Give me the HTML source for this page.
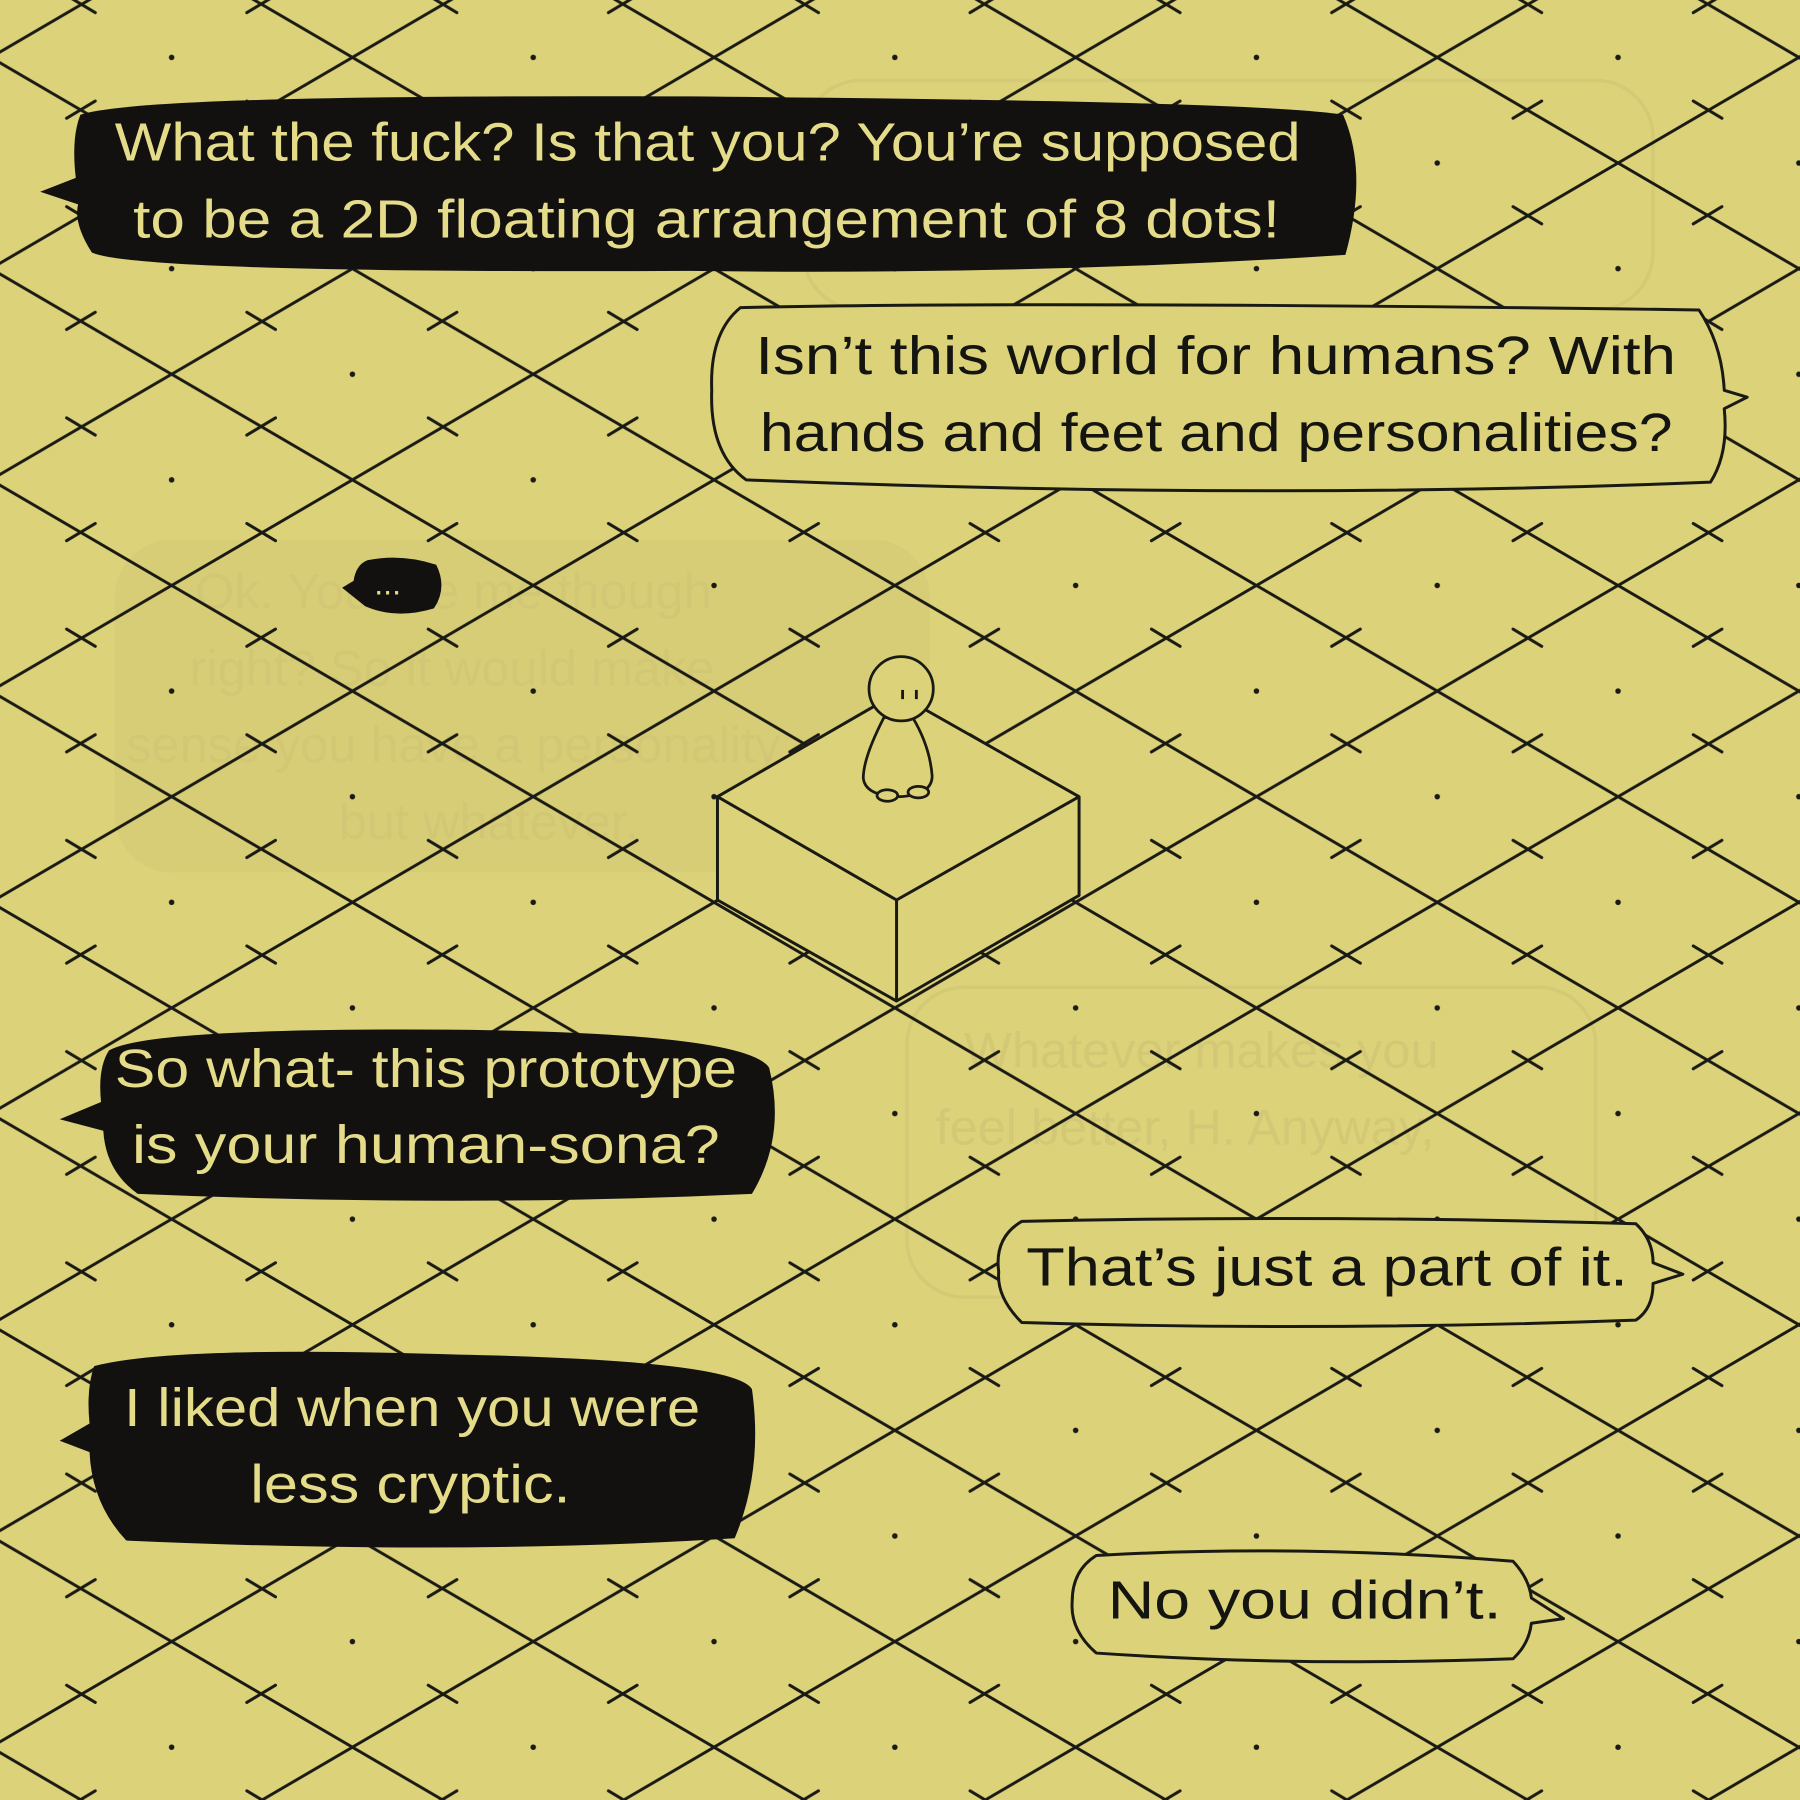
<!DOCTYPE html>
<html><head><meta charset="utf-8"><style>
html,body{margin:0;padding:0;background:#dcd27a;}
svg{display:block}
text{font-family:"Liberation Sans",sans-serif;}
</style></head><body>
<svg width="1800" height="1800" viewBox="0 0 1568 1568" xmlns="http://www.w3.org/2000/svg">
<defs>
<pattern id="g" x="-8" y="-42" width="315" height="184" patternUnits="userSpaceOnUse">
<g stroke="#1a1a14" stroke-width="2.6" fill="none" stroke-linecap="round">
<path d="M0 92 L157.5 0 L315 92 L157.5 184 Z"/>
<path d="M66 38 L91 53 M223 53 L248 38 M223 130 L248 145 M66 145 L91 130"/>
</g>
<circle cx="157.5" cy="92" r="2.4" fill="#1a1a14"/>
<circle cx="0" cy="0" r="2.4" fill="#1a1a14"/>
<circle cx="315" cy="0" r="2.4" fill="#1a1a14"/>
<circle cx="0" cy="184" r="2.4" fill="#1a1a14"/>
<circle cx="315" cy="184" r="2.4" fill="#1a1a14"/>
</pattern>
</defs>
<rect width="1568" height="1568" fill="#dcd27a"/>

<!-- faint ghost bubbles (under grid) -->
<g opacity="0.4">
<rect x="100" y="470" width="710" height="290" rx="50" fill="#d0c672"/>
<rect x="790" y="860" width="600" height="270" rx="50" fill="none" stroke="#c9bf70" stroke-width="3"/>
<rect x="700" y="70" width="740" height="200" rx="50" fill="none" stroke="#c9bf70" stroke-width="3"/>
</g>
<g font-size="44" fill="#cfc575" opacity="0.7">
<text x="170" y="530">Ok. You are me though</text>
<text x="165" y="597">right? So it would make</text>
<text x="110" y="664">sense you have a personality,</text>
<text x="295" y="731">but whatever.</text>
<text x="840" y="930">Whatever makes you</text>
<text x="815" y="997">feel better, H. Anyway,</text>
</g>

<rect width="1568" height="1568" fill="url(#g)"/>

<!-- box -->
<g stroke="#1a1a14" stroke-width="2.6" fill="#dcd27a" stroke-linejoin="round">
<path d="M625 694 L781 604 L940 694 L940 780 L781 872 L625 784 Z"/>
<path d="M625 694 L781 784 L940 694 M781 784 L781 872" fill="none"/>
</g>
<!-- figure -->
<g stroke="#1a1a14" stroke-width="2.4" fill="#dcd27a">
<path d="M770 625 Q752 660 752 678 Q754 694 785 694 Q812 692 812 676 Q810 650 795 625 Z"/>
<ellipse cx="773" cy="693" rx="9" ry="5"/>
<ellipse cx="800" cy="690" rx="9" ry="5"/>
<circle cx="785" cy="600" r="28"/>
</g>
<g fill="#1a1a14"><rect x="785" y="601" width="2.5" height="8"/><rect x="797" y="601" width="2.5" height="8"/></g>

<!-- black bubbles -->
<g fill="#121110">
<path d="M70 100 Q120 82 600 84 Q1100 88 1170 100 Q1192 150 1172 222 Q900 240 600 236 Q120 238 80 220 Q64 195 68 178 L35 167 L66 155 Q62 120 70 100 Z"/>
<path d="M320 488 Q350 482 380 492 Q390 512 378 530 Q345 540 318 528 L298 512 L308 506 Q310 492 320 488 Z"/>
<path d="M95 915 Q130 895 400 897 Q650 900 670 930 Q685 990 655 1040 Q400 1052 120 1040 Q92 1020 90 985 L52 975 L88 960 Q85 930 95 915 Z"/>
<path d="M82 1190 Q150 1172 400 1180 Q640 1185 655 1210 Q665 1280 640 1340 Q400 1355 110 1342 Q80 1310 78 1265 L52 1255 L78 1240 Q75 1210 82 1190 Z"/>
</g>
<g fill="#e5dc8a" font-size="47">
<text x="100" y="140" textLength="1033" lengthAdjust="spacingAndGlyphs">What the fuck? Is that you? You’re supposed</text>
<text x="116" y="207" textLength="999" lengthAdjust="spacingAndGlyphs">to be a 2D floating arrangement of 8 dots!</text>
<text x="100" y="947" textLength="542" lengthAdjust="spacingAndGlyphs">So what- this prototype</text>
<text x="115" y="1013" textLength="512" lengthAdjust="spacingAndGlyphs">is your human-sona?</text>
<text x="108" y="1242" textLength="502" lengthAdjust="spacingAndGlyphs">I liked when you were</text>
<text x="218" y="1309" textLength="279" lengthAdjust="spacingAndGlyphs">less cryptic.</text>
<text x="326" y="518" font-size="28">...</text>
</g>

<!-- outline bubbles -->
<g fill="#dcd27a" stroke="#1a1a14" stroke-width="2.6" stroke-linejoin="round">
<path d="M645 268 Q900 262 1480 270 Q1500 300 1502 340 L1522 346 L1502 356 Q1506 395 1490 420 Q1100 436 650 418 Q618 395 620 340 Q618 290 645 268 Z"/>
<path d="M890 1064 Q1150 1058 1425 1066 Q1440 1080 1440 1100 L1466 1110 L1440 1118 Q1440 1140 1425 1150 Q1150 1160 890 1152 Q868 1130 870 1108 Q866 1078 890 1064 Z"/>
<path d="M955 1355 Q1130 1345 1318 1360 Q1332 1375 1334 1392 L1362 1410 L1334 1414 Q1332 1432 1318 1445 Q1130 1452 955 1440 Q932 1420 934 1395 Q934 1368 955 1355 Z"/>
</g>
<g fill="#141410" font-size="47">
<text x="658" y="326" textLength="802" lengthAdjust="spacingAndGlyphs">Isn’t this world for humans? With</text>
<text x="662" y="393" textLength="795" lengthAdjust="spacingAndGlyphs">hands and feet and personalities?</text>
<text x="894" y="1120" textLength="524" lengthAdjust="spacingAndGlyphs">That’s just a part of it.</text>
<text x="965" y="1410" textLength="343" lengthAdjust="spacingAndGlyphs">No you didn’t.</text>
</g>
</svg>
</body></html>
